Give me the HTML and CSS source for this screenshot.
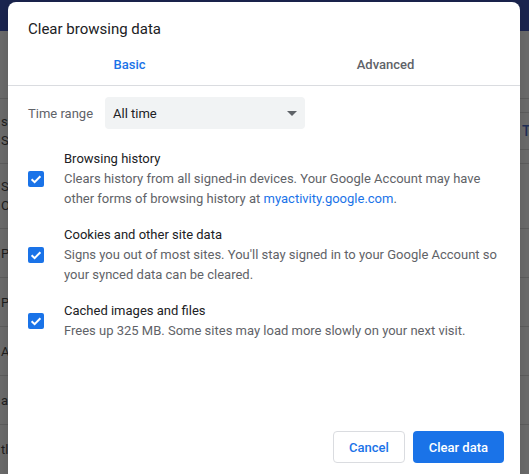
FILE: index.html
```html
<!DOCTYPE html>
<html lang="en">
  <head>
    <meta charset="UTF-8" />
    <meta name="viewport" content="width=device-width, initial-scale=1.0" />
    <title>Clear browsing data</title>
    <link rel="stylesheet" href="styles.css">
  </head>
  <body>
    <div class="settings">
      <div class="toolbar"></div>
      <div class="section">
        <div class="row row-tall">
          <div class="row-text">
            <div>s</div>
            <div>S</div>
          </div>
          <span class="row-btn">T</span>
        </div>
        <div class="row row-tall">
          <div class="row-text">
            <div>S</div>
            <div>O</div>
          </div>
        </div>
        <div class="row"><div class="row-text">P</div></div>
        <div class="row"><div class="row-text">P</div></div>
        <div class="row"><div class="row-text">A</div></div>
        <div class="row"><div class="row-text">a</div></div>
        <div class="row"><div class="row-text">tl</div></div>
      </div>
    </div>

    <div class="dialog">
      <h1 class="dialog-title">Clear browsing data</h1>

      <div class="tabs">
        <div class="tab tab-active">Basic</div>
        <div class="tab">Advanced</div>
      </div>

      <div class="time-range">
        <span class="label">Time range</span>
        <div class="select">
          <span>All time</span>
          <span class="arrow"></span>
        </div>
      </div>

      <div class="option">
        <span class="checkbox">
          <svg width="16" height="16" viewBox="0 0 16 16">
            <path d="M3.6 8.2 6.6 11.1 12.4 5.2" fill="none" stroke="#fff" stroke-width="2" />
          </svg>
        </span>
        <div class="option-text">
          <div class="option-title">Browsing history</div>
          <div class="option-desc">
            Clears history from all signed-in devices. Your Google Account may have
            other forms of browsing history at <a href="#" class="link">myactivity.google.com</a>.
          </div>
        </div>
      </div>

      <div class="option">
        <span class="checkbox">
          <svg width="16" height="16" viewBox="0 0 16 16">
            <path d="M3.6 8.2 6.6 11.1 12.4 5.2" fill="none" stroke="#fff" stroke-width="2" />
          </svg>
        </span>
        <div class="option-text">
          <div class="option-title">Cookies and other site data</div>
          <div class="option-desc">
            Signs you out of most sites. You'll stay signed in to your Google Account so
            your synced data can be cleared.
          </div>
        </div>
      </div>

      <div class="option">
        <span class="checkbox">
          <svg width="16" height="16" viewBox="0 0 16 16">
            <path d="M3.6 8.2 6.6 11.1 12.4 5.2" fill="none" stroke="#fff" stroke-width="2" />
          </svg>
        </span>
        <div class="option-text">
          <div class="option-title">Cached images and files</div>
          <div class="option-desc">
            Frees up 325 MB. Some sites may load more slowly on your next visit.
          </div>
        </div>
      </div>

      <div class="actions">
        <button class="btn btn-cancel">Cancel</button>
        <button class="btn btn-primary">Clear data</button>
      </div>
    </div>
  </body>
</html>
```

FILE: styles.css
```css
* {
  padding: 0;
  margin: 0;
  box-sizing: border-box;
}
body {
  font-family: Roboto, "Liberation Sans", sans-serif;
  font-size: 13px;
  background: #6c6c6c;
  overflow: hidden;
  height: 474px;
  position: relative;
}

/* dimmed settings page behind the dialog */
.settings {
  width: 529px;
}
.toolbar {
  height: 31px;
  background: #1b2550;
}
.section {
  padding-top: 67px;
  color: #1e1e1e;
  font-size: 13px;
}
.row {
  height: 49px;
  border-top: 1px solid #5e5e5e;
  display: flex;
  align-items: center;
  white-space: nowrap;
}
.row-tall {
  height: 65px;
}
.row-tall .row-text div {
  line-height: 19px;
}
.row-text {
  flex: 1;
  padding-left: 1px;
}
.row-btn {
  width: 20px;
  height: 38px;
  border: 1px solid #5e5e5e;
  border-right: none;
  border-radius: 4px 0 0 4px;
  padding-left: 12px;
  display: flex;
  align-items: center;
  color: #1f2f58;
  font-weight: 500;
  font-size: 14px;
}

/* dialog */
.dialog {
  position: absolute;
  top: 2px;
  left: 8px;
  width: 512px;
  height: 500px;
  background: #fff;
  border-radius: 8px;
  box-shadow: 0 0 16px rgba(0, 0, 0, 0.15);
  padding: 17px 16px 0 20px;
  color: #202124;
}
.dialog-title {
  font-size: 15px;
  font-weight: 400;
  line-height: 20px;
  margin-bottom: 4px;
}
.tabs {
  display: grid;
  grid-template-columns: 243px 1fr;
  height: 43px;
  margin: 0 -16px 0 -20px;
  border-bottom: 1px solid #dadce0;
}
.tab {
  display: flex;
  align-items: center;
  justify-content: center;
  font-weight: 500;
  color: #5f6368;
}
.tab-active {
  color: #1a73e8;
}
.time-range {
  display: flex;
  align-items: center;
  margin-top: 11px;
  height: 32px;
}
.label {
  width: 77px;
  color: #5f6368;
}
.select {
  width: 200px;
  height: 32px;
  background: #f1f3f4;
  border-radius: 4px;
  display: flex;
  align-items: center;
  justify-content: space-between;
  padding: 0 8px;
}
.arrow {
  border-left: 5px solid transparent;
  border-right: 5px solid transparent;
  border-top: 5px solid #5f6368;
}
.option {
  display: flex;
  align-items: center;
  line-height: 20px;
}
.time-range + .option {
  margin-top: 20px;
}
.option + .option {
  margin-top: 16px;
}
.checkbox {
  width: 16px;
  height: 16px;
  flex-shrink: 0;
  background: #1a73e8;
  border-radius: 2px;
  margin-right: 20px;
  display: flex;
}
.option-desc {
  color: #5f6368;
}
.link {
  color: #1a73e8;
  text-decoration: none;
}
.actions {
  display: flex;
  justify-content: flex-end;
  gap: 8px;
  margin-top: 90px;
}
.btn {
  height: 32px;
  padding: 0 16px;
  border-radius: 4px;
  font-family: inherit;
  font-size: 13px;
  font-weight: 500;
}
.btn-cancel {
  background: #fff;
  color: #1a73e8;
  border: 1px solid #dadce0;
  padding: 0 15px;
}
.btn-primary {
  background: #1a73e8;
  color: #fff;
  border: none;
}
```
